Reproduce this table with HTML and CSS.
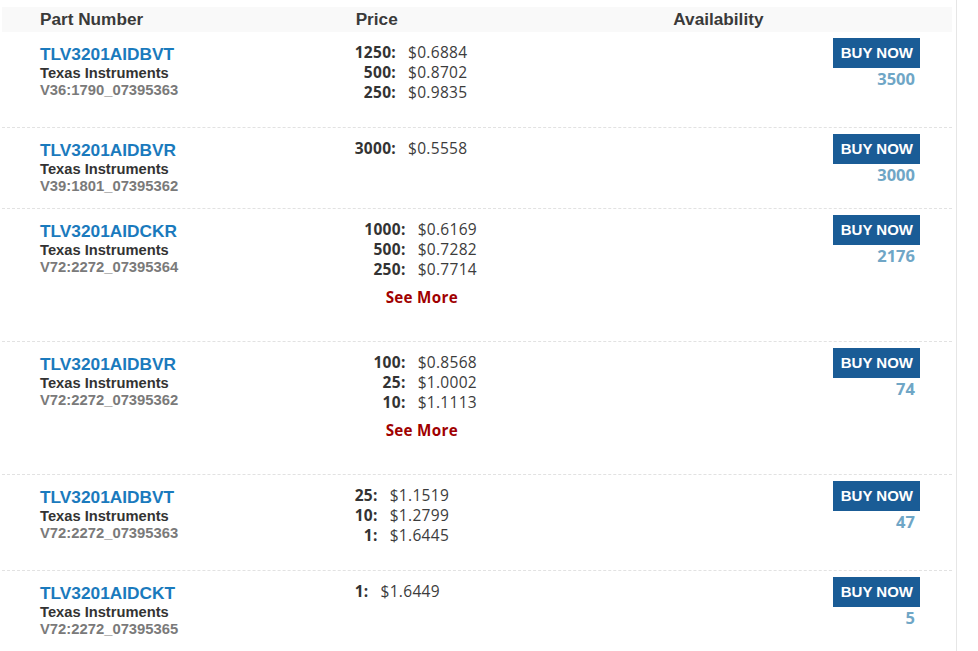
FILE: index.html
```html
<!DOCTYPE html>
<html>
<head>
<meta charset="utf-8">
<link rel="stylesheet" href="styles.css">
</head>
<body>
<div class="panel">
  <div class="head">
    <div class="hcell">Part Number</div>
    <div class="hcell">Price</div>
    <div class="hcell">Availability</div>
  </div>

  <div class="row">
    <div class="part">
      <a class="pn" href="#">TLV3201AIDBVT</a>
      <div class="mfr">Texas Instruments</div>
      <div class="sku">V36:1790_07395363</div>
    </div>
    <div class="price">
      <div class="breaks">
        <span class="qty">1250:</span><span class="amt">$0.6884</span>
        <span class="qty">500:</span><span class="amt">$0.8702</span>
        <span class="qty">250:</span><span class="amt">$0.9835</span>
      </div>
    </div>
    <div class="avail">
      <button class="buy">BUY NOW</button>
      <div class="stock">3500</div>
    </div>
  </div>

  <div class="row">
    <div class="part">
      <a class="pn" href="#">TLV3201AIDBVR</a>
      <div class="mfr">Texas Instruments</div>
      <div class="sku">V39:1801_07395362</div>
    </div>
    <div class="price">
      <div class="breaks">
        <span class="qty">3000:</span><span class="amt">$0.5558</span>
      </div>
    </div>
    <div class="avail">
      <button class="buy">BUY NOW</button>
      <div class="stock">3000</div>
    </div>
  </div>

  <div class="row">
    <div class="part">
      <a class="pn" href="#">TLV3201AIDCKR</a>
      <div class="mfr">Texas Instruments</div>
      <div class="sku">V72:2272_07395364</div>
    </div>
    <div class="price">
      <div class="breaks wide">
        <span class="qty">1000:</span><span class="amt">$0.6169</span>
        <span class="qty">500:</span><span class="amt">$0.7282</span>
        <span class="qty">250:</span><span class="amt">$0.7714</span>
      </div>
      <a class="see-more" href="#">See More</a>
    </div>
    <div class="avail">
      <button class="buy">BUY NOW</button>
      <div class="stock">2176</div>
    </div>
  </div>

  <div class="row">
    <div class="part">
      <a class="pn" href="#">TLV3201AIDBVR</a>
      <div class="mfr">Texas Instruments</div>
      <div class="sku">V72:2272_07395362</div>
    </div>
    <div class="price">
      <div class="breaks wide">
        <span class="qty">100:</span><span class="amt">$0.8568</span>
        <span class="qty">25:</span><span class="amt">$1.0002</span>
        <span class="qty">10:</span><span class="amt">$1.1113</span>
      </div>
      <a class="see-more" href="#">See More</a>
    </div>
    <div class="avail">
      <button class="buy">BUY NOW</button>
      <div class="stock">74</div>
    </div>
  </div>

  <div class="row">
    <div class="part">
      <a class="pn" href="#">TLV3201AIDBVT</a>
      <div class="mfr">Texas Instruments</div>
      <div class="sku">V72:2272_07395363</div>
    </div>
    <div class="price">
      <div class="breaks">
        <span class="qty">25:</span><span class="amt">$1.1519</span>
        <span class="qty">10:</span><span class="amt">$1.2799</span>
        <span class="qty">1:</span><span class="amt">$1.6445</span>
      </div>
    </div>
    <div class="avail">
      <button class="buy">BUY NOW</button>
      <div class="stock">47</div>
    </div>
  </div>

  <div class="row">
    <div class="part">
      <a class="pn" href="#">TLV3201AIDCKT</a>
      <div class="mfr">Texas Instruments</div>
      <div class="sku">V72:2272_07395365</div>
    </div>
    <div class="price">
      <div class="breaks">
        <span class="qty">1:</span><span class="amt">$1.6449</span>
      </div>
    </div>
    <div class="avail">
      <button class="buy">BUY NOW</button>
      <div class="stock">5</div>
    </div>
  </div>
</div>
</body>
</html>
```
FILE: styles.css
```css
html, body {
  margin: 0;
  padding: 0;
  background: #ffffff;
}

body {
  font-family: "Liberation Sans", Arial, sans-serif;
  color: #333333;
}

.panel {
  width: 950px;
  padding: 7px 4px 0 2px;
  border-right: 1px solid #e6e6e6;
  min-height: 651px;
  box-sizing: content-box;
}

.head {
  display: grid;
  grid-template-columns: 1fr 1fr 1fr;
  background: #f9f9f9;
  height: 25px;
}

.hcell {
  padding-left: 38px;
  font-size: 17.2px;
  font-weight: bold;
  line-height: 24px;
  color: #3a3a3a;
}

.hcell:nth-child(2) {
  padding-left: 37px;
}

.row {
  display: grid;
  grid-template-columns: 1fr 1fr 1fr;
  border-bottom: 1px dashed #e2e2e2;
  align-items: start;
}

.part {
  padding: 12px 0 13px 38px;
  display: flex;
  flex-direction: column;
  align-items: flex-start;
}

.pn {
  font-size: 17.3px;
  font-weight: bold;
  line-height: 20px;
  color: #1a7abd;
  text-decoration: none;
}

.mfr {
  font-size: 14.7px;
  font-weight: bold;
  line-height: 18px;
  color: #333333;
}

.sku {
  font-size: 14.8px;
  font-weight: bold;
  line-height: 17px;
  color: #7a7a7a;
}

.price {
  padding: 10px 0 25px 36px;
  display: flex;
  flex-direction: column;
  align-items: flex-start;
  font-family: "Open Sans", "Noto Sans", sans-serif;
}

.breaks {
  display: grid;
  grid-template-columns: auto auto;
  column-gap: 12px;
  font-size: 15.5px;
  line-height: 20px;
  letter-spacing: 0.3px;
}

.breaks.wide {
  grid-template-columns: 51px auto;
}

.qty {
  justify-self: end;
  font-weight: bold;
  color: #333333;
}

.amt {
  color: #3c3c3c;
}

.see-more {
  margin: 8px 0 9px 0;
  padding-left: 31px;
  font-size: 15.2px;
  line-height: 20px;
  letter-spacing: 0.3px;
  font-weight: bold;
  color: #a00000;
  text-decoration: none;
}

.avail {
  padding: 6px 32px 0 0;
  display: flex;
  flex-direction: column;
  align-items: flex-end;
}

.buy {
  height: 30px;
  padding: 0 7px 0 8px;
  border: none;
  border-radius: 0;
  background: #1a5c96;
  color: #ffffff;
  font-family: "Liberation Sans", Arial, sans-serif;
  font-size: 15px;
  font-weight: bold;
  line-height: 30px;
  cursor: pointer;
}

.stock {
  padding-right: 5px;
  font-family: "Open Sans", "Noto Sans", sans-serif;
  font-size: 16.5px;
  font-weight: bold;
  line-height: 21px;
  color: #6fa6c6;
}
```
